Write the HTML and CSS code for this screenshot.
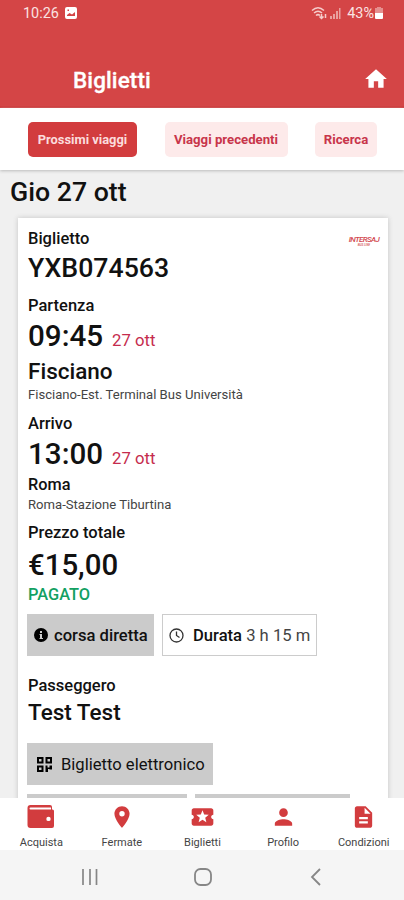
FILE: index.html
```html
<!DOCTYPE html>
<html lang="it">
<head>
    <meta charset="utf-8">
    <title>Biglietti</title>
    <link rel="stylesheet" href="styles.css">
</head>
<body>
    <header class="header">
        <div class="status">
            <span class="clock">10:26</span>
            <svg class="picture" width="12" height="12" viewBox="0 0 12 12"><path fill="#fff" fill-rule="evenodd" d="M2 0h8a2 2 0 0 1 2 2v8a2 2 0 0 1-2 2H2a2 2 0 0 1-2-2V2a2 2 0 0 1 2-2zM2 9h8V5L7 7.500 4.500 6 2 8zM2.500 2.500v1.500H4V2.500z"/></svg>
            <svg class="wifi" width="17" height="14" viewBox="0 0 17 14" fill="none" stroke="#f6cccb" stroke-width="1.500"><path d="M1 4.500Q7 -1 13 4.500M3 7Q7 3.500 11 7M5 9.500Q7 7.800 9 9.500"/><path d="M10.500 8v4M8.500 10.500l2 2 2-2M14.500 12V8"/></svg>
            <svg class="signal" width="11" height="11" viewBox="0 0 11 11"><path fill="#e9a09f" d="M0 8h2v3H0zM3 6h2v5H3zM6 3h2v8H6zM9 0h1.500v11H9z"/></svg>
            <span class="percent">43%</span>
            <svg class="battery" width="8" height="12" viewBox="0 0 8 12"><path fill="#e58f8e" d="M2 0h4v1h2v6H0V1h2z"/><path fill="#fff" d="M0 6h8v5a1 1 0 0 1-1 1H1a1 1 0 0 1-1-1z"/></svg>
        </div>
        <div class="title-bar">
            <h1>Biglietti</h1>
            <svg class="home" width="26" height="26" viewBox="0 0 24 24"><path fill="#fff" d="M10 20v-6h4v6h5v-8h3L12 3 2 12h3v8z"/></svg>
        </div>
    </header>

    <div class="tabs">
        <div class="tab active">Prossimi viaggi</div>
        <div class="tab previous">Viaggi precedenti</div>
        <div class="tab search">Ricerca</div>
    </div>

    <main class="content">
        <h2>Gio 27 ott</h2>
        <div class="card">
            <div class="card-top">
                <div class="label">Biglietto</div>
                <div class="brand">INTERSAJ<span class="brand-sub">BUS LINE</span></div>
            </div>
            <div class="code">YXB074563</div>

            <div class="label">Partenza</div>
            <div class="time">09:45 <span class="date">27 ott</span></div>
            <div class="city">Fisciano</div>
            <div class="stop">Fisciano-Est. Terminal Bus Università</div>

            <div class="label">Arrivo</div>
            <div class="time">13:00 <span class="date">27 ott</span></div>
            <div class="city small">Roma</div>
            <div class="stop roma">Roma-Stazione Tiburtina</div>

            <div class="label price-label">Prezzo totale</div>
            <div class="price">€15,00</div>
            <div class="paid">PAGATO</div>

            <div class="row">
                <div class="box grey direct">
                    <svg width="14" height="14" viewBox="0 0 14 14"><circle cx="7" cy="7" r="7" fill="#000"/><path fill="#ccc" d="M6 3h2v2H6zM5.500 6H8v4h1v1H5.500v-1H6V7h-.5z"/></svg>
                    <b>corsa diretta</b>
                </div>
                <div class="box outline">
                    <svg width="15" height="15" viewBox="0 0 15 15" fill="none" stroke="#333" stroke-width="1.300"><circle cx="7.500" cy="7.500" r="6.500"/><path d="M7.500 3.500v4l3 2"/></svg>
                    <span class="duration"><b>Durata</b> 3 h 15 m</span>
                </div>
            </div>

            <div class="label passenger">Passeggero</div>
            <div class="name">Test Test</div>

            <div class="row tickets">
                <div class="box grey ticket">
                    <svg width="15" height="15" viewBox="0 0 15 15"><path fill="#000" fill-rule="evenodd" d="M0 0h6.500v6.500H0zM2 2v2.500h2.500V2zM8.500 0H15v6.500H8.500zM10.500 2v2.500H13V2zM0 8.500h6.500V15H0zM2 10.500V13h2.500v-2.500zM8.500 8.500h2v2h2v-2H15v4h-2.500v-.5h-1.500V15H8.500z"/></svg>
                    <span>Biglietto elettronico</span>
                </div>
            </div>
            <div class="row more">
                <div class="box grey more-one"></div>
                <div class="box grey more-two"></div>
            </div>
        </div>
    </main>

    <nav class="nav">
        <div class="nav-item">
            <svg width="28" height="24" viewBox="0 0 28 24"><path fill="#d23c3e" fill-rule="evenodd" d="M3.500 0H23a2 2 0 0 1 2 2v2.500h.5A1.500 1.500 0 0 1 27 6v15a2 2 0 0 1-2 2H3.500A3 3 0 0 1 .5 20V3a3 3 0 0 1 3-3zM3.500 2.500a1 1 0 0 0 0 2H24v-2zM21.500 11.700a2.200 2.200 0 1 0 0 4.400 2.200 2.200 0 0 0 0-4.400z"/></svg>
            <span>Acquista</span>
        </div>
        <div class="nav-item">
            <svg width="26" height="26" viewBox="0 0 24 24"><path fill="#d23c3e" d="M12 2C8.130 2 5 5.130 5 9c0 5.250 7 13 7 13s7-7.750 7-13c0-3.870-3.130-7-7-7zm0 9.500a2.500 2.500 0 0 1 0-5 2.500 2.500 0 0 1 0 5z"/></svg>
            <span>Fermate</span>
        </div>
        <div class="nav-item">
            <svg width="27" height="27" viewBox="0 0 24 24"><path fill="#d23c3e" d="M20 12c0-1.100.9-2 2-2V6c0-1.100-.9-2-2-2H4c-1.100 0-1.990.9-1.990 2v4c1.100 0 1.990.9 1.990 2s-.89 2-2 2v4c0 1.100.9 2 2 2h16c1.100 0 2-.9 2-2v-4c-1.100 0-2-.9-2-2zm-4.420 4.800L12 14.500l-3.580 2.300 1.080-4.120-3.290-2.690 4.240-.25L12 5.800l1.540 3.950 4.240.25-3.290 2.690 1.090 4.110z"/></svg>
            <span>Biglietti</span>
        </div>
        <div class="nav-item">
            <svg width="27" height="27" viewBox="0 0 24 24"><path fill="#d23c3e" d="M12 12c2.210 0 4-1.790 4-4s-1.790-4-4-4-4 1.790-4 4 1.790 4 4 4zm0 2c-2.670 0-8 1.340-8 4v2h16v-2c0-2.660-5.330-4-8-4z"/></svg>
            <span>Profilo</span>
        </div>
        <div class="nav-item">
            <svg width="27" height="27" viewBox="0 0 24 24"><path fill="#d23c3e" d="M14 2H6c-1.100 0-1.990.9-1.990 2L4 20c0 1.100.89 2 1.990 2H18c1.100 0 2-.9 2-2V8l-6-6zm2 16H8v-2h8v2zm0-4H8v-2h8v2zm-3-5V3.500L18.500 9H13z"/></svg>
            <span>Condizioni</span>
        </div>
    </nav>

    <footer class="system">
        <svg width="18" height="18" viewBox="0 0 18 18" stroke="#868686" stroke-width="1.700"><path d="M2 1v16M9 1v16M15.500 1v16"/></svg>
        <svg width="18" height="18" viewBox="0 0 18 18" fill="none" stroke="#868686" stroke-width="1.800"><rect x="1" y="1" width="16" height="16" rx="5.500"/></svg>
        <svg width="18" height="18" viewBox="0 0 18 18" fill="none" stroke="#868686" stroke-width="1.800"><path d="M13 1L5 9l8 8"/></svg>
    </footer>
</body>
</html>
```

FILE: styles.css
```css
* {
    box-sizing: border-box;
}

body {
    margin: 0;
    height: 900px;
    display: flex;
    flex-direction: column;
    overflow: hidden;
    font-family: Roboto, sans-serif;
    color: #111;
    background-color: #fff;
}

svg {
    display: block;
    flex: none;
}

h1, h2 {
    margin: 0;
    font-weight: 500;
}

/* Header */
.header {
    height: 108px;
    flex: none;
    background-color: #d44546;
    border-bottom: 2px solid #d03a3b;
    color: #fff;
}

.status {
    display: flex;
    align-items: center;
    height: 26px;
    padding: 0 21px 0 23px;
    font-size: 14.4px;
    color: #fae3e2;
}

.picture {
    margin-left: 6px;
}

.wifi {
    margin-left: auto;
}

.signal {
    margin: 1px 6px 0 2px;
}

.battery {
    margin-left: 1px;
}

.title-bar {
    display: flex;
    align-items: center;
    justify-content: space-between;
    height: 54px;
    margin-top: 26px;
    padding: 2px 15px 0 73px;
}

h1 {
    font-size: 22.5px;
    line-height: 28px;
    letter-spacing: 0.1px;
    -webkit-text-stroke: 0.3px #fff;
}

.home {
    margin-top: -2px;
}

/* Tabs */
.tabs {
    display: flex;
    flex: none;
    height: 62px;
    padding: 14px 27px 0 28px;
    justify-content: space-between;
    position: relative;
    box-shadow: 0 1px 3px #bbb;
}

.tab {
    height: 35px;
    line-height: 36px;
    border-radius: 5px;
    background-color: #fdeaea;
    color: #c8354a;
    font-size: 13.2px;
    font-weight: 700;
    text-align: center;
    white-space: nowrap;
}

.tab.active {
    width: 109px;
    background-color: #d23c3e;
    color: #fbdcdd;
    font-size: 12.9px;
}

.tab.previous {
    width: 123px;
}

.tab.search {
    width: 62px;
}

/* Ticket */
.content {
    flex: 1;
    min-height: 0;
    overflow: hidden;
    padding: 0 16px 0 18px;
    background-color: #f0f0f0;
}

h2 {
    height: 48px;
    margin-left: -8px;
    font-size: 26.7px;
    line-height: 45px;
}

.card {
    height: 640px;
    padding: 11px 9px 0 10px;
    background-color: #fff;
    box-shadow: 0 0 5px #c4c4c4;
    white-space: nowrap;
}

.card-top {
    display: flex;
    justify-content: space-between;
}

.label {
    font-size: 16.5px;
    font-weight: 500;
    line-height: 20px;
}

.brand {
    padding-top: 6px;
    font-size: 8px;
    font-style: italic;
    font-weight: 500;
    line-height: 9px;
    letter-spacing: -0.7px;
    color: #d2474d;
    text-align: center;
}

.brand-sub {
    display: block;
    font-size: 3px;
    line-height: 3px;
    letter-spacing: 0;
}

.code {
    margin-bottom: 9px;
    font-size: 26.7px;
    font-weight: 500;
    line-height: 38px;
}

.time {
    display: flex;
    align-items: baseline;
    gap: 9px;
    height: 40px;
    font-size: 29.6px;
    font-weight: 500;
    line-height: 40px;
}

.date {
    font-size: 16.7px;
    font-weight: 400;
    line-height: 20px;
    color: #c52b4d;
}

.city {
    margin-top: 1px;
    font-size: 22.5px;
    font-weight: 500;
    line-height: 28px;
}

.city.small {
    font-size: 16.3px;
    line-height: 20px;
}

.stop {
    margin: 1px 0 10px;
    font-size: 13.1px;
    line-height: 18px;
    color: #444;
}

.stop.roma {
    margin-bottom: 9px;
}

.price {
    margin-top: 2px;
    font-size: 29.4px;
    font-weight: 500;
    line-height: 40px;
}

.paid {
    font-size: 16.4px;
    font-weight: 500;
    line-height: 20px;
    color: #12a062;
}

.row {
    display: flex;
    gap: 8px;
    margin: 9px 0 0 -1px;
}

.box {
    display: flex;
    align-items: center;
    height: 42px;
    font-size: 16.6px;
}

.box b {
    font-weight: 500;
}

.grey {
    background-color: #cbcbcb;
}

.direct {
    width: 127px;
    padding-left: 7px;
    gap: 6px;
}

.outline {
    width: 155px;
    padding-left: 6px;
    gap: 9px;
    border: 1px solid #ccc;
}

.duration {
    color: #444;
}

.duration b {
    color: #111;
}

.passenger {
    margin-top: 20px;
}

.name {
    margin-top: 2px;
    font-size: 22.5px;
    font-weight: 500;
    line-height: 28px;
}

.tickets {
    margin-top: 17px;
}

.ticket {
    width: 186px;
    padding-left: 10px;
    gap: 9px;
}

.more-one {
    width: 160px;
}

.more-two {
    width: 155px;
}

/* Bottom navigation */
.nav {
    display: flex;
    flex: none;
    height: 52px;
    padding-left: 1px;
    position: relative;
    background-color: #fff;
}

.nav-item {
    flex: 1;
    display: flex;
    flex-direction: column;
    align-items: center;
    font-size: 11px;
    color: #444;
}

.nav-item svg {
    height: 26px;
    margin-top: 6px;
}

.nav-item span {
    margin-top: 6px;
    line-height: 14px;
}

.system {
    display: flex;
    flex: none;
    align-items: center;
    justify-content: center;
    gap: 95px;
    height: 50px;
    padding: 4px 0 0 2px;
    background-color: #f5f5f5;
}
```
